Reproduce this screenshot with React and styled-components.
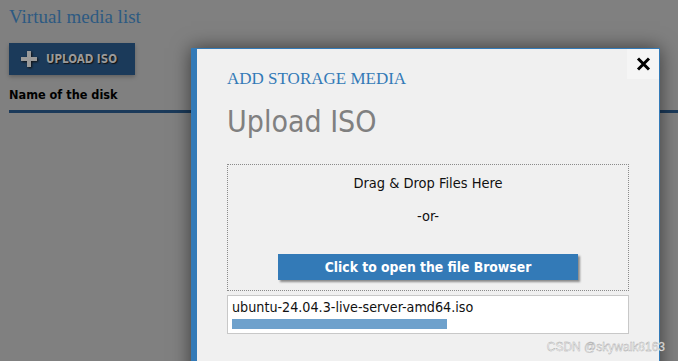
import React from "react";
import styled, { createGlobalStyle } from "styled-components";

const GlobalStyle = createGlobalStyle`
  html, body {
    margin: 0;
    padding: 0;
    background-color: #808080;
    overflow: hidden;
  }
`;
const Page = styled.div`
  position: relative;
  width: 678px;
  height: 361px;
  padding: 4px 0 0 9px;
  box-sizing: border-box;
  overflow: hidden;
  font-family: "DejaVu Sans Condensed", "DejaVu Sans", sans-serif;
`;
const Title = styled.h1`
  margin: 0;
  font-family: "Liberation Serif", serif;
  font-weight: normal;
  font-size: 19px;
  line-height: 26px;
  color: #2d5a82;
`;
const UploadButton = styled.button`
  display: flex;
  align-items: center;
  gap: 9px;
  margin-top: 13px;
  width: 126px;
  height: 32px;
  padding: 0 0 0 12px;
  border: none;
  background-color: #1b3a5a;
  box-shadow: 0 2px 4px rgba(0, 0, 0, 0.25);
  color: #9a9a9a;
  font-family: inherit;
  font-weight: bold;
  font-size: 11.5px;
  text-shadow: 1px 1px 1px #111;
  svg {
    filter: drop-shadow(1px 1px 1px #111);
  }
`;
const TableHead = styled.div`
  margin-top: 12px;
  padding-bottom: 8px;
  border-bottom: 3px solid #1b3a5a;
  font-weight: bold;
  font-size: 12.6px;
  color: #000;
`;
const Modal = styled.div`
  position: absolute;
  left: 191px;
  top: 48px;
  width: 402px;
  height: 340px;
  display: flex;
  flex-direction: column;
  padding: 19px 30px 0 30px;
  border-left: 6px solid #337ab7;
  border-top: 1px solid #337ab7;
  border-right: 1px solid #337ab7;
  background-color: #f0f0f0;
  box-shadow: 0 0 18px rgba(0, 0, 0, 0.55);
`;
const CloseButton = styled.button`
  position: absolute;
  top: 0;
  right: 0;
  width: 32px;
  height: 30px;
  display: flex;
  align-items: center;
  justify-content: center;
  padding: 0;
  border: none;
  background-color: #f5f5f5;
`;
const Kicker = styled.div`
  font-family: "Liberation Serif", serif;
  font-size: 17px;
  line-height: 22px;
  color: #337ab7;
`;
const Heading = styled.h2`
  margin: 12px 0 0;
  font-weight: normal;
  font-size: 30px;
  line-height: 40px;
  color: #808080;
`;
const DropZone = styled.div`
  display: flex;
  flex-direction: column;
  align-items: center;
  width: 402px;
  height: 127px;
  margin-top: 22px;
  box-sizing: border-box;
  border: 1px dotted #8a8a8a;
  padding-top: 9px;
  font-size: 14.5px;
  color: #111;
`;
const DropText = styled.div`
  line-height: 18px;
  margin-bottom: ${(p) => p.gap}px;
`;
const BrowseButton = styled.button`
  width: 300px;
  height: 26px;
  padding: 0;
  border: none;
  background-color: #337ab7;
  box-shadow: 2px 2px 2px #8a8a8a;
  color: #fff;
  font-family: inherit;
  font-weight: bold;
  font-size: 13.8px;
`;
const FileBox = styled.div`
  width: 402px;
  height: 39px;
  margin-top: 4px;
  box-sizing: border-box;
  border: 1px solid #c8c8c8;
  background-color: #fff;
  padding: 3px 4px 0;
  font-size: 14.2px;
  color: #111;
`;
const FileName = styled.div`
  line-height: 17px;
`;
const Progress = styled.div`
  margin-top: 3px;
  height: 10px;
  background-color: #6ea1cc;
`;
const Watermark = styled.div`
  position: absolute;
  right: 13px;
  bottom: 7px;
  font-family: "Liberation Sans", sans-serif;
  font-size: 12px;
  color: #fbfbfb;
  -webkit-text-stroke: 0.4px #a8a8a8;
`;

const App = () => {
  return (
    <Page>
      <GlobalStyle />
      <Title>Virtual media list</Title>
      <UploadButton>
        <svg width="16" height="16" viewBox="0 0 16 16">
          <path d="M6 0h4v6h6v4h-6v6H6v-6H0V6h6z" fill="#9a9a9a" />
        </svg>
        UPLOAD ISO
      </UploadButton>
      <TableHead>Name of the disk</TableHead>
      <Modal>
        <CloseButton>
          <svg width="15" height="14" viewBox="0 0 15 14">
            <path d="M2 1.5l11 11M13 1.5l-11 11" stroke="#000" strokeWidth="3" />
          </svg>
        </CloseButton>
        <Kicker>ADD STORAGE MEDIA</Kicker>
        <Heading>Upload ISO</Heading>
        <DropZone>
          <DropText gap={15}>Drag &amp; Drop Files Here</DropText>
          <DropText gap={29}>-or-</DropText>
          <BrowseButton>Click to open the file Browser</BrowseButton>
        </DropZone>
        <FileBox>
          <FileName>ubuntu-24.04.3-live-server-amd64.iso</FileName>
          <Progress style={{ width: "215px" }} />
        </FileBox>
      </Modal>
      <Watermark>CSDN @skywalk8163</Watermark>
    </Page>
  );
};
export default App;
